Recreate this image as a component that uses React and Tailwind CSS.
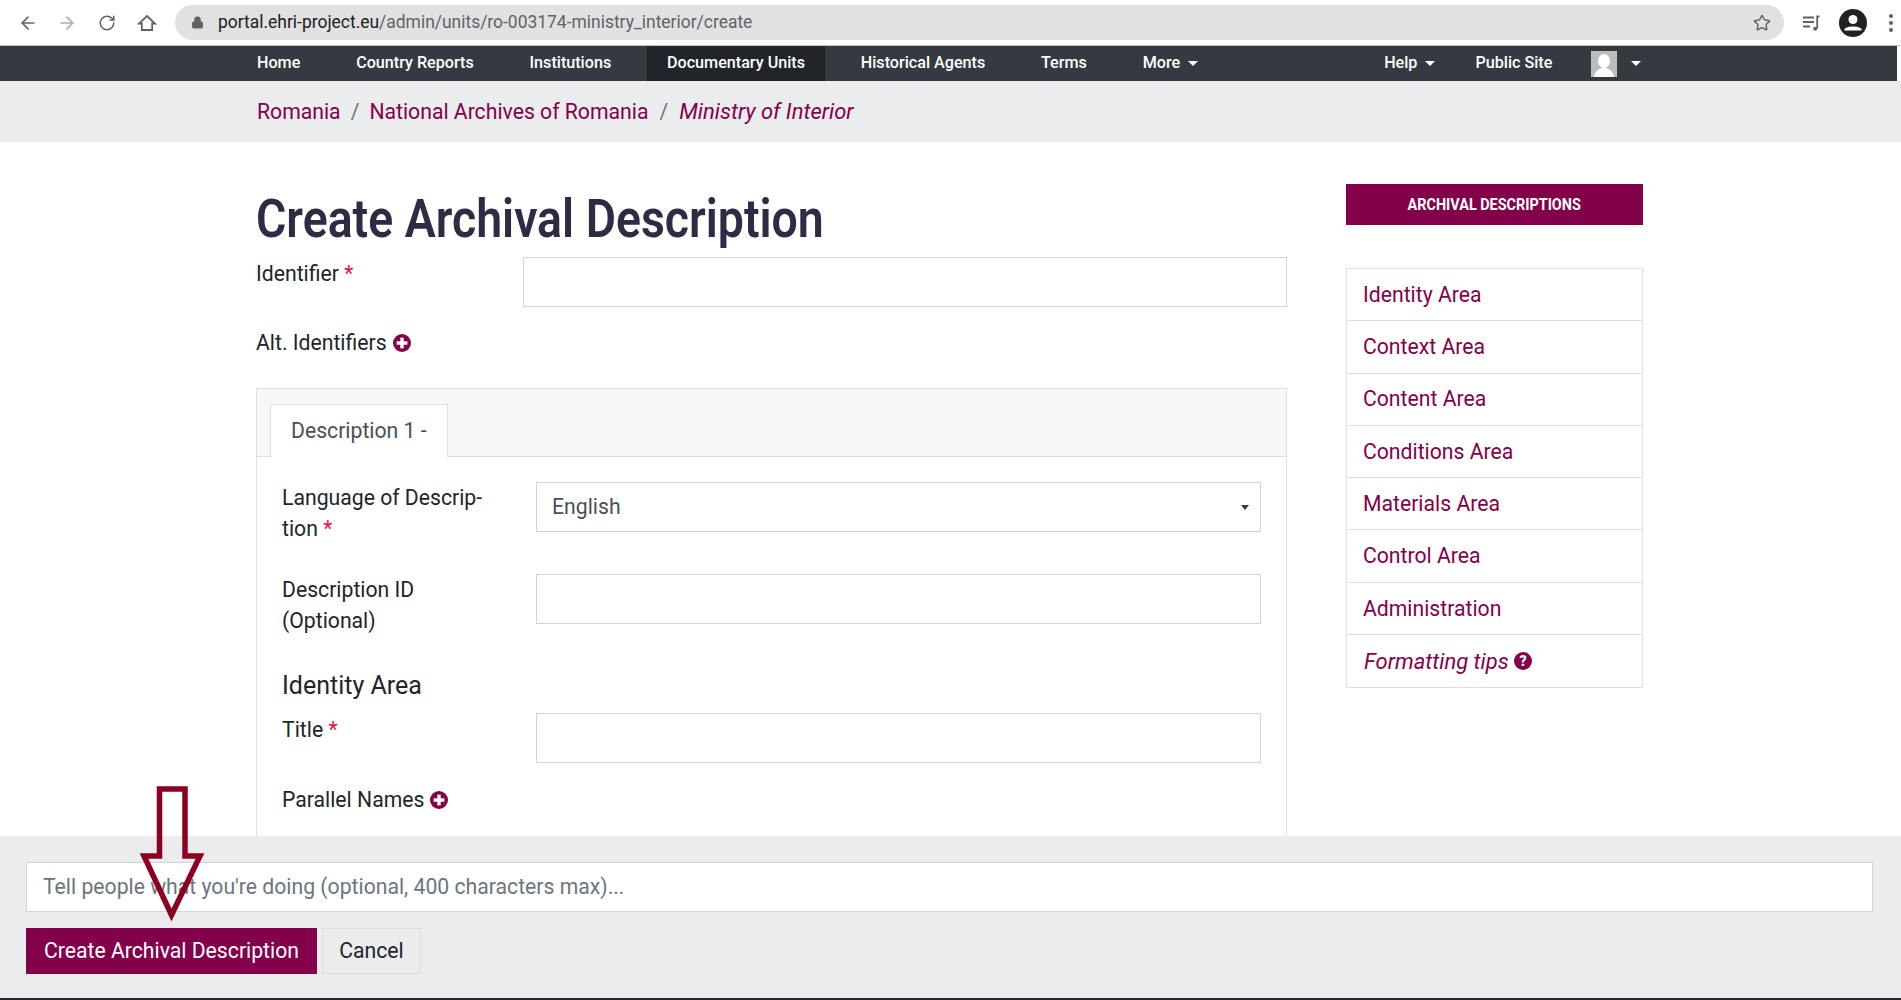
import React from "react";
import { ArrowLeft, ArrowRight, RotateCw, Lock, Star } from "lucide-react";

const Caret = ({ className = "" }) => (
  <span className={"inline-block w-0 h-0 border-x-[5px] border-x-transparent border-t-[5px] border-t-white " + className} />
);

const Plus = () => (
  <svg viewBox="0 0 18 18" className="inline-block w-[18px] h-[18px] ml-[6px] align-[-2px]">
    <circle cx="9" cy="9" r="9" fill="#83004b" />
    <rect x="3.6" y="7.3" width="10.8" height="3.4" fill="#fff" />
    <rect x="7.3" y="3.6" width="3.4" height="10.8" fill="#fff" />
  </svg>
);

const Req = () => <span className="text-[#e6143c]"> *</span>;

const Input = ({ className = "" }) => (
  <div className={"h-[50px] border border-[#ced4da] bg-white " + className} />
);

const navL = ["Home", "Country Reports", "Institutions", "Documentary Units", "Historical Agents", "Terms"];
const side = ["Identity Area", "Context Area", "Content Area", "Conditions Area", "Materials Area", "Control Area", "Administration"];

export default function App() {
  return (
    <div className="relative h-[1000px] w-[1901px] overflow-hidden bg-white flex flex-col text-[21.2px] text-[#212529]" style={{ fontFamily: "Roboto, sans-serif" }}>
      {/* browser chrome */}
      <div className="h-[46px] shrink-0 flex items-center pl-[18px] border-b border-[#c4c4c4] bg-white">
        <ArrowLeft size={20} className="text-[#5f6368]" />
        <ArrowRight size={20} className="text-[#a9adb1] ml-[19px]" />
        <RotateCw size={18} className="text-[#5f6368] ml-[21px]" />
        <svg viewBox="0 0 20 20" className="w-[20px] h-[20px] ml-[21px]" fill="none" stroke="#5f6368" strokeWidth="1.8" strokeLinejoin="miter">
          <path d="M10 3 L18 10.5 H15.2 V17 H4.8 V10.5 H2 Z" />
        </svg>
        <div className="ml-[18px] w-[1609px] h-[35px] rounded-full bg-[#e1e1e1] flex items-center pl-[16px] pr-[13px] text-[17.45px]">
          <Lock size={13} className="text-[#5f6368] fill-[#5f6368]" />
          <span className="ml-[14px] text-[#202124]">portal.ehri-project.eu</span>
          <span className="text-[#5f6368]">/admin/units/ro-003174-ministry_interior/create</span>
          <Star size={18} className="ml-auto text-[#5f6368]" />
        </div>
        <svg viewBox="0 0 20 20" className="w-[20px] h-[20px] ml-[18px]" fill="none" stroke="#5f6368" strokeWidth="1.8">
          <path d="M1 4.5H12M1 9H12M1 13.5H8" />
          <path d="M17.5 3.5H15.2V15.5" />
          <circle cx="13.2" cy="15.7" r="2" fill="#5f6368" stroke="none" />
        </svg>
        <svg viewBox="0 0 28 28" className="w-[28px] h-[28px] ml-[17px]">
          <circle cx="14" cy="14" r="14" fill="#202124" />
          <circle cx="14" cy="10.5" r="4.5" fill="#fff" />
          <path d="M5.5 20c2-3.5 15-3.5 17 0v1.5h-17z" fill="#fff" />
        </svg>
        <div className="ml-[22px] flex flex-col gap-[3px]">
          <span className="w-[4px] h-[4px] rounded-full bg-[#5f6368]" />
          <span className="w-[4px] h-[4px] rounded-full bg-[#5f6368]" />
          <span className="w-[4px] h-[4px] rounded-full bg-[#5f6368]" />
        </div>
      </div>

      {/* nav */}
      <div className="h-[35px] shrink-0 mr-[4px] bg-[#343a40] flex text-white text-[16.15px] font-medium pl-[237px]">
        <div className="flex gap-[15.8px]">
          {navL.map((n) => (
            <div key={n} className={"px-[20px] flex items-center " + (n === "Documentary Units" ? "bg-[#212529]" : "")}>{n}</div>
          ))}
          <div className="px-[20px] flex items-center gap-[8px]">More <Caret /></div>
        </div>
        <div className="ml-[146px] flex">
          <div className="px-[20px] flex items-center gap-[8px]">Help <Caret /></div>
          <div className="px-[20px] flex items-center">Public Site</div>
          <div className="pl-[18.5px] flex items-center gap-[14px]">
            <div className="w-[26px] h-[26px] bg-[#bdbdbd] overflow-hidden">
              <svg viewBox="0 0 26 26" className="w-full h-full">
                <ellipse cx="13" cy="10" rx="6" ry="7" fill="#fff" />
                <path d="M3 26c1-7 6-9 10-9s9 2 10 9z" fill="#fff" />
              </svg>
            </div>
            <Caret />
          </div>
        </div>
      </div>

      {/* breadcrumb */}
      <div className="h-[61px] shrink-0 bg-[#ebecee] flex items-center pl-[257px] text-[#83004b]">
        <span>Romania</span>
        <span className="mx-[10px] text-[#6c757d]">/</span>
        <span>National Archives of Romania</span>
        <span className="mx-[11px] text-[#6c757d]">/</span>
        <span className="italic text-[22px]">Ministry of Interior</span>
      </div>

      {/* main */}
      <div className="flex-1 min-h-0 overflow-hidden flex pl-[256px]">
        <div className="w-[1031px] shrink-0">
          <h1 className="mt-[45px] h-[70px] text-[54px] leading-[64px] font-semibold text-[#2e2b45] whitespace-nowrap origin-left scale-x-[0.86]">Create Archival Description</h1>
          <div className="flex">
            <div className="w-[267px] pt-[2px] leading-[30px]">Identifier<Req /></div>
            <Input className="w-[764px]" />
          </div>
          <div className="mt-[21px] leading-[30px]">Alt. Identifiers<Plus /></div>
          <div className="mt-[30px] h-[600px] border-x border-t border-[#dfdfdf]">
            <div className="h-[68px] bg-[#f7f7f7] border-b border-[#dfdfdf] pl-[13px] pt-[15px]">
              <div className="w-[178px] h-[53px] bg-white border-x border-t border-[#dfdfdf] pl-[20px] pt-[11px] leading-[30px] text-[#495057]">Description 1 -</div>
            </div>
            <div className="px-[25px] pt-[25px]">
              <div className="flex">
                <div className="w-[254px] leading-[31px]">Language of Descrip-<br />tion<Req /></div>
                <div className="relative w-[725px] h-[50px] border border-[#ced4da] flex items-center pl-[15px] text-[#495057]">
                  English
                  <span className="absolute right-[11px] top-[22px] w-0 h-0 border-x-[4px] border-x-transparent border-t-[5px] border-t-[#343a40]" />
                </div>
              </div>
              <div className="flex mt-[30px]">
                <div className="w-[254px] leading-[31px]">Description ID<br />(Optional)</div>
                <Input className="w-[725px]" />
              </div>
              <div className="mt-[35px] text-[25px] leading-[30px]">Identity Area</div>
              <div className="flex mt-[12px]">
                <div className="w-[254px] pt-[2px] leading-[30px]">Title<Req /></div>
                <Input className="w-[725px]" />
              </div>
              <div className="mt-[22px] leading-[30px]">Parallel Names<Plus /></div>
            </div>
          </div>
        </div>
        <div className="ml-[59px] w-[297px] shrink-0 pt-[42px]">
          <div className="h-[41px] bg-[#83004b] text-white flex items-center justify-center text-[16px] font-bold"><span className="inline-block whitespace-nowrap scale-x-[0.9]">ARCHIVAL DESCRIPTIONS</span></div>
          <div className="mt-[43px] border border-[#dfdfdf] text-[#83004b]">
            {side.map((s) => (
              <div key={s} className="h-[52.3px] flex items-center pl-[16px] border-b border-[#dfdfdf]">{s}</div>
            ))}
            <div className="h-[52px] flex items-center pl-[17px] italic text-[22px]">
              Formatting tips
              <svg viewBox="0 0 18 18" className="w-[18px] h-[18px] ml-[5px]">
                <circle cx="9" cy="9" r="9" fill="#83004b" />
                <text x="9" y="14" textAnchor="middle" fontSize="14" fontWeight="900" fontStyle="normal" fill="#fff" fontFamily="Roboto, sans-serif">?</text>
              </svg>
            </div>
          </div>
        </div>
      </div>

      {/* footer */}
      <div className="h-[164px] shrink-0 bg-[#ebecee] px-[26px] pt-[26px] border-b-2 border-[#212529]">
        <div className="h-[50px] w-[1847px] bg-white border border-[#ced4da] flex items-center pl-[16px] text-[#6c757d]">Tell people what you're doing (optional, 400 characters max)...</div>
        <div className="mt-[16px] flex gap-[5px]">
          <div className="w-[291px] h-[46px] bg-[#83004b] text-white flex items-center justify-center">Create Archival Description</div>
          <div className="w-[99px] h-[46px] border border-[#dcdde0] flex items-center justify-center">Cancel</div>
        </div>
      </div>

      {/* annotation arrow */}
      <svg className="absolute left-[130px] top-[780px] w-[85px] h-[145px] pointer-events-none" viewBox="130 780 85 145">
        <polygon points="159.5,789 185,789 185,856 200,856 171.5,915 144,856 159.5,856" fill="none" stroke="#8b0021" strokeWidth="5.5" />
      </svg>
    </div>
  );
}
